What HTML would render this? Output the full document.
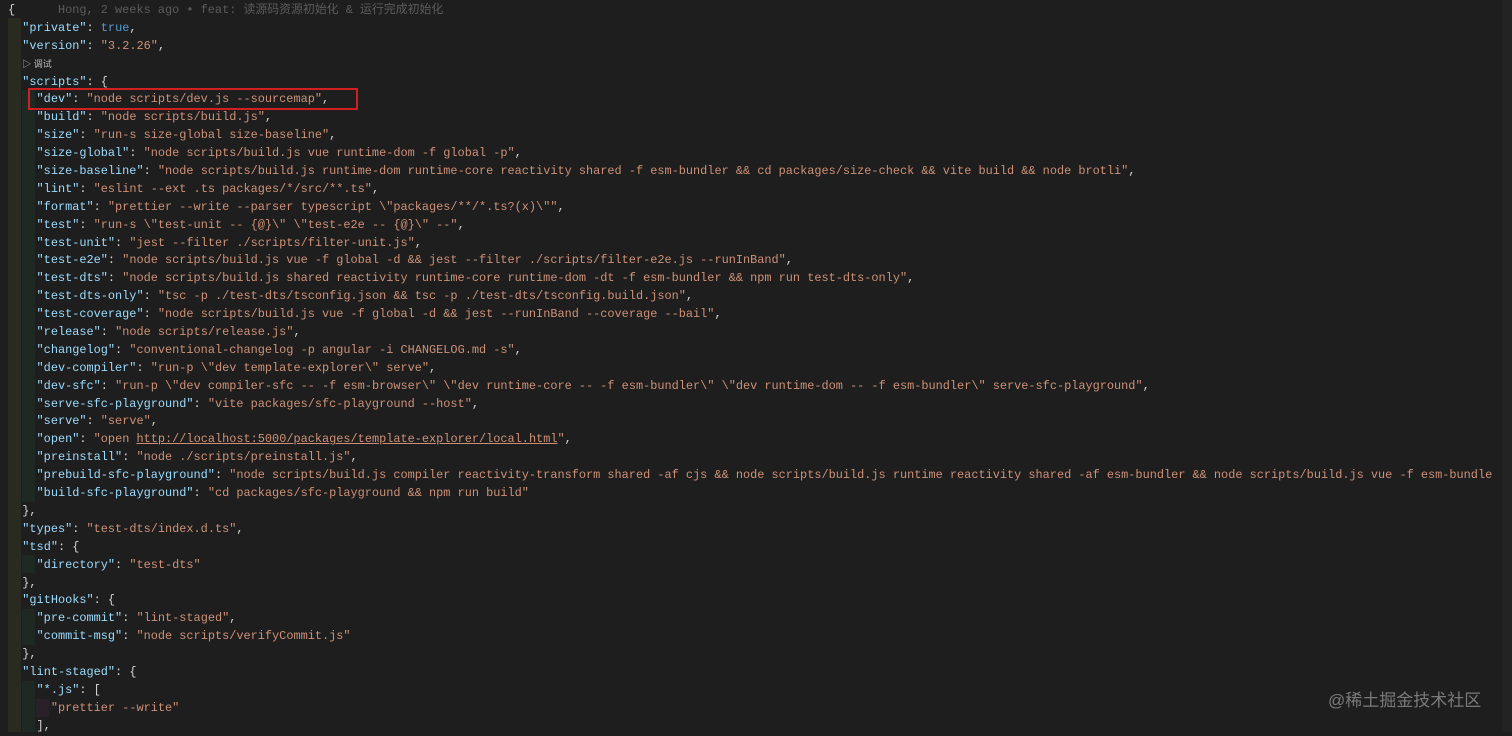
<!DOCTYPE html>
<html><head><meta charset="utf-8"><style>
body{margin:0;width:1512px;height:732px;overflow:hidden;background:#1e1e1e;position:relative}
.code{position:absolute;left:8px;top:2px;font-family:"Liberation Mono","Noto Sans CJK SC",monospace;font-size:11.9px;line-height:17.9px;color:#d4d4d4}
.l{height:17.9px;position:relative;white-space:pre}
.k{color:#9cdcfe}.s{color:#ce9178}.b{color:#569cd6}
.u{text-decoration:underline}
.g1{position:absolute;left:8px;width:13px;background:#2a2b20}
.g2{position:absolute;left:22px;width:13px;background:#1f2924}
.g3{position:absolute;left:36px;width:13px;background:#2a2028}
.blame{color:#5c5c5c}
.lens{font-family:"Liberation Sans","Noto Sans CJK SC",sans-serif;font-size:9px;color:#bbb}
.box{position:absolute;left:28px;top:88px;width:330px;height:22px;border:2px solid #d21f1f;box-sizing:border-box}
.wm{position:absolute;left:1328px;top:686px;font-family:"Liberation Sans","Noto Sans CJK SC",sans-serif;font-size:17px;color:#7a7a7a}
.sb{position:absolute;left:1502px;top:0;width:10px;height:732px;background:#232323}
</style></head><body>
<div class="g1" style="top:18px;height:714px"></div>
<div class="g2" style="top:90px;height:412px"></div>
<div class="g2" style="top:555px;height:18px"></div>
<div class="g2" style="top:609px;height:36px"></div>
<div class="g2" style="top:681px;height:51px"></div>
<div class="g3" style="top:699px;height:18px"></div>
<div class="sb"></div>
<div class="code"><div class="l">{      <span class="blame">Hong, 2 weeks ago • feat: 读源码资源初始化 &amp; 运行完成初始化</span></div><div class="l">  <span class="k">"private"</span>: <span class="b">true</span>,</div><div class="l">  <span class="k">"version"</span>: <span class="s">"3.2.26"</span>,</div><div class="l">  <span class="lens">▷ 调试</span></div><div class="l">  <span class="k">"scripts"</span>: {</div><div class="l">    <span class="k">"dev"</span>: <span class="s">"node scripts/dev.js --sourcemap"</span>,</div><div class="l">    <span class="k">"build"</span>: <span class="s">"node scripts/build.js"</span>,</div><div class="l">    <span class="k">"size"</span>: <span class="s">"run-s size-global size-baseline"</span>,</div><div class="l">    <span class="k">"size-global"</span>: <span class="s">"node scripts/build.js vue runtime-dom -f global -p"</span>,</div><div class="l">    <span class="k">"size-baseline"</span>: <span class="s">"node scripts/build.js runtime-dom runtime-core reactivity shared -f esm-bundler &amp;&amp; cd packages/size-check &amp;&amp; vite build &amp;&amp; node brotli"</span>,</div><div class="l">    <span class="k">"lint"</span>: <span class="s">"eslint --ext .ts packages/*/src/**.ts"</span>,</div><div class="l">    <span class="k">"format"</span>: <span class="s">"prettier --write --parser typescript \"packages/**/*.ts?(x)\""</span>,</div><div class="l">    <span class="k">"test"</span>: <span class="s">"run-s \"test-unit -- {@}\" \"test-e2e -- {@}\" --"</span>,</div><div class="l">    <span class="k">"test-unit"</span>: <span class="s">"jest --filter ./scripts/filter-unit.js"</span>,</div><div class="l">    <span class="k">"test-e2e"</span>: <span class="s">"node scripts/build.js vue -f global -d &amp;&amp; jest --filter ./scripts/filter-e2e.js --runInBand"</span>,</div><div class="l">    <span class="k">"test-dts"</span>: <span class="s">"node scripts/build.js shared reactivity runtime-core runtime-dom -dt -f esm-bundler &amp;&amp; npm run test-dts-only"</span>,</div><div class="l">    <span class="k">"test-dts-only"</span>: <span class="s">"tsc -p ./test-dts/tsconfig.json &amp;&amp; tsc -p ./test-dts/tsconfig.build.json"</span>,</div><div class="l">    <span class="k">"test-coverage"</span>: <span class="s">"node scripts/build.js vue -f global -d &amp;&amp; jest --runInBand --coverage --bail"</span>,</div><div class="l">    <span class="k">"release"</span>: <span class="s">"node scripts/release.js"</span>,</div><div class="l">    <span class="k">"changelog"</span>: <span class="s">"conventional-changelog -p angular -i CHANGELOG.md -s"</span>,</div><div class="l">    <span class="k">"dev-compiler"</span>: <span class="s">"run-p \"dev template-explorer\" serve"</span>,</div><div class="l">    <span class="k">"dev-sfc"</span>: <span class="s">"run-p \"dev compiler-sfc -- -f esm-browser\" \"dev runtime-core -- -f esm-bundler\" \"dev runtime-dom -- -f esm-bundler\" serve-sfc-playground"</span>,</div><div class="l">    <span class="k">"serve-sfc-playground"</span>: <span class="s">"vite packages/sfc-playground --host"</span>,</div><div class="l">    <span class="k">"serve"</span>: <span class="s">"serve"</span>,</div><div class="l">    <span class="k">"open"</span>: <span class="s">"open <span class="u">http://localhost:5000/packages/template-explorer/local.html</span>"</span>,</div><div class="l">    <span class="k">"preinstall"</span>: <span class="s">"node ./scripts/preinstall.js"</span>,</div><div class="l">    <span class="k">"prebuild-sfc-playground"</span>: <span class="s">"node scripts/build.js compiler reactivity-transform shared -af cjs &amp;&amp; node scripts/build.js runtime reactivity shared -af esm-bundler &amp;&amp; node scripts/build.js vue -f esm-bundle</span></div><div class="l">    <span class="k">"build-sfc-playground"</span>: <span class="s">"cd packages/sfc-playground &amp;&amp; npm run build"</span></div><div class="l">  },</div><div class="l">  <span class="k">"types"</span>: <span class="s">"test-dts/index.d.ts"</span>,</div><div class="l">  <span class="k">"tsd"</span>: {</div><div class="l">    <span class="k">"directory"</span>: <span class="s">"test-dts"</span></div><div class="l">  },</div><div class="l">  <span class="k">"gitHooks"</span>: {</div><div class="l">    <span class="k">"pre-commit"</span>: <span class="s">"lint-staged"</span>,</div><div class="l">    <span class="k">"commit-msg"</span>: <span class="s">"node scripts/verifyCommit.js"</span></div><div class="l">  },</div><div class="l">  <span class="k">"lint-staged"</span>: {</div><div class="l">    <span class="k">"*.js"</span>: [</div><div class="l">      <span class="s">"prettier --write"</span></div><div class="l">    ],</div></div>
<div class="box"></div>
<div class="wm">@稀土掘金技术社区</div>
</body></html>
